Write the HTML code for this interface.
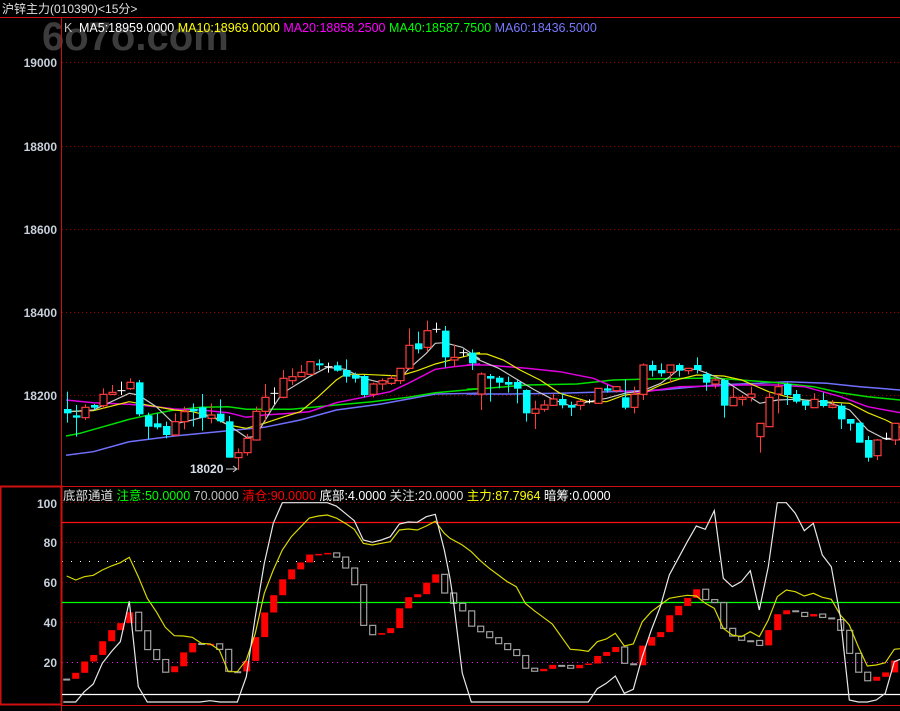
<!DOCTYPE html>
<html><head><meta charset="utf-8"><style>
html,body{margin:0;padding:0;background:#000;width:900px;height:711px;overflow:hidden}
svg{display:block}
text{font-family:"Liberation Sans","Noto Sans CJK SC",sans-serif}
</style></head><body>
<svg id="s" width="900" height="711" xmlns="http://www.w3.org/2000/svg">
<rect width="900" height="711" fill="#000"/>
<text x="42" y="50" font-size="40" font-weight="bold" fill="#3c3c3c">6o7o.com</text>
<text x="2" y="13" font-size="12" fill="#e0e0e0">沪锌主力(010390)&lt;15分&gt;</text>
<line x1="0" y1="17.5" x2="900" y2="17.5" stroke="#d01010"/>
<line x1="61.5" y1="17" x2="61.5" y2="711" stroke="#d01010"/>
<text y="32" font-size="12.5"><tspan x="64" fill="#c0c0c0">K</tspan><tspan x="79" fill="#fff">MA5:18959.0000</tspan><tspan fill="#ffff00"> MA10:18969.0000</tspan><tspan fill="#ff00ff"> MA20:18858.2500</tspan><tspan fill="#00ff00"> MA40:18587.7500</tspan><tspan fill="#7878ff"> MA60:18436.5000</tspan></text>
<g font-size="12" font-weight="bold" fill="#c8d0dc" text-anchor="end">
<text x="57" y="67">19000</text><text x="57" y="151">18800</text><text x="57" y="234">18600</text><text x="57" y="317">18400</text><text x="57" y="400">18200</text>
<text x="57" y="508">100</text><text x="57" y="547">80</text><text x="57" y="587">60</text><text x="57" y="627">40</text><text x="57" y="667">20</text>
</g>
<g stroke="#9a0000" stroke-dasharray="1,3">
<line x1="62" y1="62.5" x2="900" y2="62.5"/><line x1="62" y1="146.5" x2="900" y2="146.5"/><line x1="62" y1="229.5" x2="900" y2="229.5"/><line x1="62" y1="312.5" x2="900" y2="312.5"/><line x1="62" y1="395.5" x2="900" y2="395.5"/>
<line x1="62" y1="502.5" x2="900" y2="502.5"/><line x1="62" y1="542.5" x2="900" y2="542.5"/><line x1="62" y1="582.5" x2="900" y2="582.5"/><line x1="62" y1="622.5" x2="900" y2="622.5"/>
</g>
<line x1="62" y1="561.5" x2="900" y2="561.5" stroke="#fff" stroke-dasharray="1,8"/>
<line x1="62" y1="662.5" x2="900" y2="662.5" stroke="#ff00ff" stroke-dasharray="1,4"/>
<rect x="0.5" y="486.5" width="61" height="218" fill="none" stroke="#d01010" stroke-width="2"/>
<line x1="61" y1="486.5" x2="900" y2="486.5" stroke="#d01010"/>
<line x1="61" y1="705.5" x2="900" y2="705.5" stroke="#d01010"/>
<line x1="62" y1="522.5" x2="900" y2="522.5" stroke="#ff1010" stroke-width="1.3"/>
<line x1="62" y1="602.5" x2="900" y2="602.5" stroke="#00ff00" stroke-width="1.3"/>
<line x1="62" y1="694.5" x2="900" y2="694.5" stroke="#fff" stroke-width="1.3"/>
<text y="500" font-size="12.5"><tspan x="63" fill="#e0e0e0">底部通道</tspan><tspan fill="#00ff00"> 注意:50.0000</tspan><tspan fill="#c0c0c0"> 70.0000</tspan><tspan fill="#ff0000"> 清仓:90.0000</tspan><tspan fill="#fff"> 底部:4.0000</tspan><tspan fill="#e0e0e0"> 关注:20.0000</tspan><tspan fill="#ffff00"> 主力:87.7964</tspan><tspan fill="#fff"> 暗筹:0.0000</tspan></text>
<text x="190" y="473" font-size="12" font-weight="bold" fill="#d8e0ec">18020</text>
<line x1="226" y1="469" x2="236" y2="469" stroke="#ccc"/><path d="M233 466 L237 469 L233 472" stroke="#ccc" fill="none"/>
<g id="g"></g>
</svg>
<script>
var g=document.getElementById('g'),NS='http://www.w3.org/2000/svg',h='';
function X(i){return 66.7+9*i}
function pl(pts,col,w){h+='<polyline fill="none" stroke="'+col+'" stroke-width="'+(w||1.2)+'" points="'+pts.map(function(p){return p[0].toFixed(1)+','+p[1].toFixed(1)}).join(' ')+'"/>';}
function z3(a){return a.map(function(p){return [60+p[0]/3,310+p[1]/3]})}
function z4(a){return a.map(function(p){return [460+p[0]/3,340+p[1]/3]})}
function z5(a){return a.map(function(p){return [p[0]/3,490+p[1]/3]})}
function z6(a){return a.map(function(p){return [450+p[0]/3,490+p[1]/3]})}
// MA lines
pl(z3([[18,436],[100,425],[208,395],[343,378],[505,362],[613,352],[721,330],[829,300],[964,282],[1126,252],[1260,250]]).concat(z4([[20,162],[150,162],[300,160],[450,155],[600,150],[764,135],[900,130],[980,125],[1100,130],[1200,140],[1320,150]])),'#7070ff',1.5);
pl(z3([[18,378],[60,370],[130,350],[208,328],[289,310],[343,300],[424,292],[505,290],[559,298],[694,298],[829,285],[937,275],[1045,262],[1126,248],[1260,236]]).concat(z4([[20,148],[80,145],[200,135],[350,132],[460,120],[602,116],[764,114],[872,122],[953,128],[1061,140],[1142,158],[1223,170],[1320,180]])),'#00e000',1.5);
pl(z3([[18,270],[100,278],[208,283],[289,290],[343,297],[424,300],[505,308],[559,322],[613,315],[694,310],[748,305],[829,278],[910,262],[991,245],[1045,220],[1126,178],[1180,170],[1260,162]]).concat(z4([[20,75],[80,75],[200,85],[300,95],[400,115],[494,155],[548,157],[656,140],[764,138],[845,135],[953,135],[1034,140],[1142,170],[1223,200],[1320,218]])),'#e000e0',1.5);
pl(z3([[18,305],[100,302],[208,275],[289,290],[343,300],[397,305],[451,318],[505,345],[559,355],[613,340],[667,322],[721,305],[775,260],[829,210],[856,193],[910,193],[1018,198],[1072,182],[1126,162],[1180,148],[1260,128]]).concat(z4([[20,42],[80,42],[130,60],[180,90],[240,120],[300,160],[386,185],[440,185],[494,165],[548,160],[602,135],[656,118],[710,105],[791,108],[845,120],[926,155],[980,170],[1034,180],[1088,185],[1169,190],[1223,218],[1277,240],[1320,262]])),'#e8e800',1.2);
pl(z3([[18,305],[100,300],[208,250],[235,255],[289,290],[343,342],[397,330],[451,315],[505,345],[559,382],[586,380],[640,290],[667,250],[748,200],[802,172],[856,178],[910,205],[964,218],[1018,210],[1045,178],[1099,130],[1126,100],[1153,98],[1207,112],[1260,148]]).concat(z4([[20,42],[62,62],[116,85],[170,118],[224,150],[278,178],[332,198],[386,185],[440,175],[494,160],[548,152],[602,130],[629,110],[656,88],[710,88],[737,98],[791,120],[845,155],[899,190],[953,180],[1007,178],[1061,182],[1115,190],[1169,210],[1223,270],[1277,298],[1320,298]])),'#c8c8c8',1.2);
// candles
var A=[['c',297,310,245,338],['c',316,323,285,380],['r',292,323,283,330],['c',285,293,282,300],['r',253,287,235,295],['r',247,253,225,255],['w',242,242,215,255],['r',217,236,205,240],['c',217,313,210,318],['c',316,350,308,388],['c',340,352,310,358],['c',348,375,335,385],['r',335,375,310,378],['r',305,335,290,358],['c',297,304,280,350],['c',292,323,252,362],['r',315,325,280,340],['c',311,334,268,338],['c',334,443,318,443],['r',428,443,415,480],['r',385,428,372,437],['r',304,390,290,392],['r',262,304,222,335],['w',250,250,232,282],['r',205,262,180,265],['r',200,212,175,225],['r',187,200,165,200],['r',155,193,155,195],['c',160,166,148,180],['w',170,170,158,188],['c',166,182,155,185],['c',180,200,148,218],['c',195,206,188,218],['c',198,255,195,262],['r',222,253,218,262],['r',212,222,205,240],['r',205,220,195,225],['r',175,212,175,222],['r',106,175,55,178],['c',100,118,65,130],['r',62,112,32,125],['w',58,58,38,68],['c',62,142,48,172],['r',142,150,105,170],['w',128,128,118,140],['c',128,160,118,180]];
var B=[['r',102,162,97,210],['c',108,116,102,185],['c',113,128,108,145],['c',126,134,110,158],['c',126,146,120,190],['c',150,220,148,245],['r',207,220,182,267],['r',195,208,180,215],['r',177,196,160,198],['c',177,196,160,205],['c',195,203,185,228],['r',184,196,180,210],['w',185,185,178,190],['r',145,190,145,192],['c',145,152,135,158],['r',140,152,138,158],['c',172,203,118,208],['r',163,202,140,220],['r',75,163,70,180],['c',75,92,62,110],['c',90,100,70,110],['r',75,97,75,128],['c',75,92,70,110],['r',85,92,85,103],['c',75,90,52,100],['c',102,128,95,152],['r',120,132,110,145],['c',120,197,118,233],['r',172,197,142,197],['r',172,178,165,197],['r',162,172,140,185],['r',250,290,250,338],['r',172,260,155,260],['r',140,162,130,220],['c',132,165,128,195],['c',162,185,150,190],['c',182,197,178,210],['r',178,203,160,203],['c',180,198,158,202],['r',195,202,180,205],['c',197,238,190,267],['c',237,251,237,272],['c',248,308,248,308],['c',300,353,288,365],['r',300,347,297,360],['w',295,295,278,300],['r',250,300,250,315]];
function cd(i,d,oy){var x=X(i),xi=Math.round(x)+.5,bt=oy+d[1]/3,bb=oy+d[2]/3,wt=oy+d[3]/3,wb=oy+d[4]/3;
 var col=d[0]=='r'?'#ff3c3c':d[0]=='c'?'#00ffff':'#ffffff';
 h+='<line x1="'+xi+'" x2="'+xi+'" y1="'+wt+'" y2="'+wb+'" stroke="'+col+'"/>';
 if(d[0]=='w'){h+='<line x1="'+(xi-4)+'" x2="'+(xi+4)+'" y1="'+bt+'" y2="'+bt+'" stroke="#fff"/>';return}
 var hh=Math.max(bb-bt,1);
 if(d[0]=='r'){h+='<rect x="'+(xi-3.5)+'" y="'+bt+'" width="7" height="'+hh+'" fill="#000" stroke="'+col+'" stroke-width="1.2"/>'}
 else h+='<rect x="'+(xi-3.5)+'" y="'+bt+'" width="7.5" height="'+hh+'" fill="'+col+'"/>';}
A.forEach(function(d,i){cd(i,d,310)});B.forEach(function(d,i){cd(i+46,d,340)});
// oscillator boxes
var c=[11.2,14.2,19.9,23.2,30.1,35.7,39.2,44.7,35.4,25.9,20.9,14.5,17.5,24.5,29.2,28.7,28.8,26,15,14.9,20.2,32.2,44.6,53.3,61.3,66.3,69.8,73.8,74.1,74.6,72.5,67,58.6,38.1,33.4,34.2,36.7,46.7,52.3,53.8,59.6,63.8,54.4,49.2,45.4,37.7,34.9,31.9,28.9,25.9,22.9,16.5,15,16.2,18.2,17.9,16.5,18.2,18.9,22.7,24.7,27.2,19,18,27.9,32.2,34.7,43.2,47.9,51.9,56.3,51.1,49.6,36.6,32.7,30.6,30.5,28,35.7,43.7,45.7,44.6,42.6,43.8,42.1,41,35.6,24,14.5,10.2,12.2,14.4,20.4];
function V(v){return 701-v*1.985}
c.forEach(function(v,i){var p=i?c[i-1]:11.3,x=X(i)-3.5,t=V(Math.max(v,p)),b=V(Math.min(v,p)),hh=Math.max(b-t,1.5);
 if(v>=p)h+='<rect x="'+x+'" y="'+t+'" width="7" height="'+hh+'" fill="#ff0000"/>';
 else if(hh<2.5)h+='<rect x="'+x+'" y="'+t+'" width="7" height="2" fill="#a0a0a0"/>';
 else h+='<rect x="'+(x+.5)+'" y="'+t+'" width="6" height="'+hh+'" fill="none" stroke="#a0a0a0" stroke-width="1.2"/>';});
pl(z5([[200,258],[227,270],[253,260],[280,256],[307,240],[334,228],[361,218],[388,202],[415,260],[442,325],[469,365],[496,412],[523,437],[550,438],[577,442],[604,460],[631,462],[658,480],[685,545],[712,545],[739,510],[766,430],[793,310],[820,240],[847,180],[874,140],[901,112],[928,84],[955,78],[982,75],[1009,84],[1036,100],[1063,118],[1090,160],[1117,165],[1144,160],[1171,155],[1198,120],[1225,117],[1252,120],[1279,108],[1306,94],[1333,130]]).concat(z6([[0,145],[37,165],[64,185],[91,212],[118,235],[145,255],[172,275],[199,290],[226,340],[253,362],[280,382],[307,402],[334,440],[361,478],[388,480],[415,484],[442,455],[469,447],[496,430],[523,468],[550,462],[577,395],[604,365],[631,345],[658,325],[685,320],[712,316],[739,318],[766,340],[793,355],[820,415],[847,435],[874,440],[901,425],[928,440],[955,390],[982,320],[1009,300],[1036,305],[1063,318],[1090,310],[1117,322],[1144,328],[1171,375],[1198,405],[1225,470],[1252,528],[1279,525],[1306,518],[1333,478],[1350,476]])),'#d8d800',1.2);
pl(z5([[190,636],[227,636],[253,605],[280,582],[307,520],[334,485],[361,455],[388,334],[415,590],[442,636],[600,636],[630,632],[660,636],[712,636],[739,560],[766,380],[793,220],[820,100],[847,38],[982,38],[1009,48],[1036,70],[1063,92],[1090,150],[1117,157],[1144,150],[1171,140],[1198,102],[1225,96],[1252,97],[1279,80],[1306,73],[1333,180]]).concat(z6([[0,265],[10,330],[37,550],[64,636],[415,636],[442,596],[469,580],[496,558],[523,610],[550,598],[577,500],[604,420],[631,350],[658,255],[685,205],[712,155],[739,108],[766,118],[793,62],[820,265],[847,290],[874,275],[901,242],[928,360],[955,230],[982,38],[1009,38],[1036,70],[1063,122],[1090,100],[1117,195],[1144,230],[1171,380],[1198,630],[1225,636],[1252,636],[1279,630],[1306,610],[1333,515],[1350,508]])),'#e8e8e8',1.2);
g.innerHTML=h;
</script>
</body></html>
